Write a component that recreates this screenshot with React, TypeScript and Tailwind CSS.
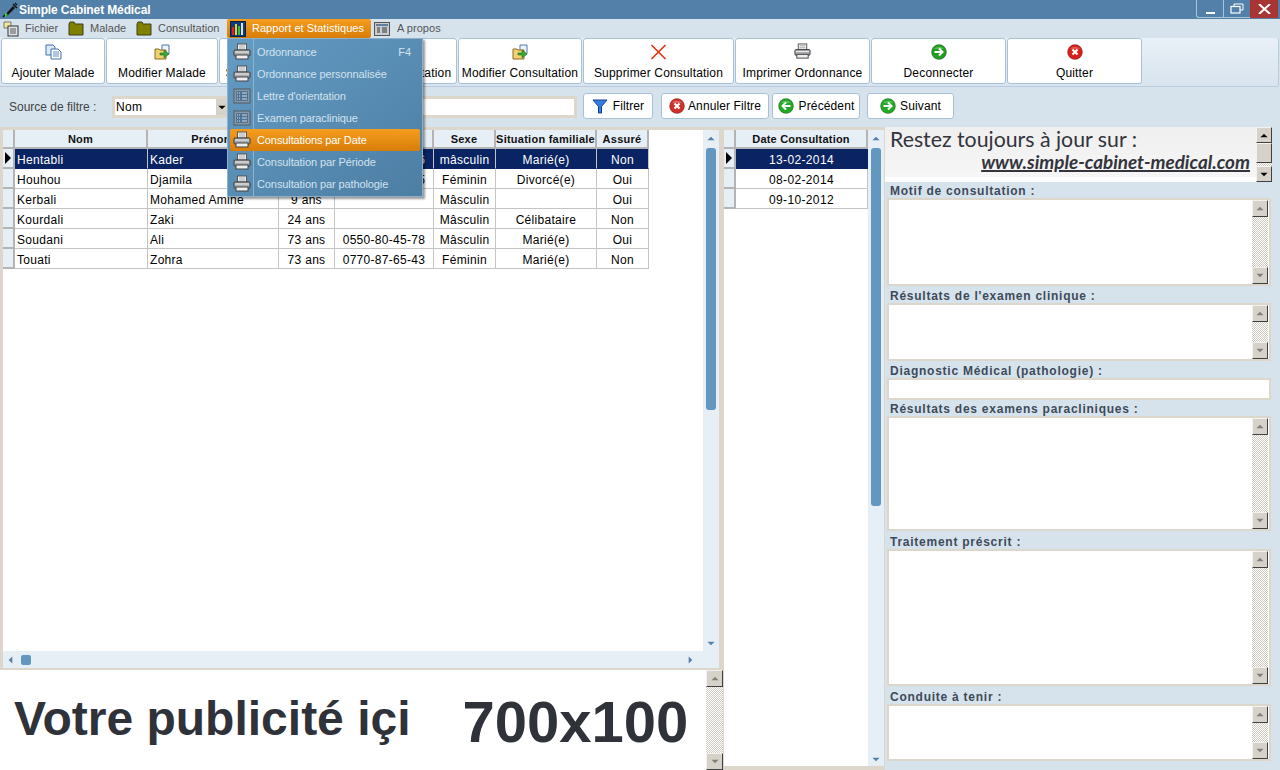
import React from "react";

const FONT = "font-['Liberation_Sans',Arial,sans-serif]";

function Printer({ s = 18 }: { s?: number }) {
  return (
    <svg width={s} height={s} viewBox="0 0 18 18">
      <rect x="4.5" y="1" width="9" height="6" fill="#f2f2f2" stroke="#555" />
      <path d="M6 3h6M6 5h6" stroke="#aaa" />
      <rect x="1" y="7" width="16" height="6" rx="1" fill="#a9acb0" stroke="#3a3a3a" />
      <rect x="3" y="12" width="12" height="4" fill="#eee" stroke="#444" />
      <path d="M2 9h14" stroke="#eee" />
    </svg>
  );
}
function Doc() {
  return (
    <svg width="18" height="16" viewBox="0 0 18 16">
      <rect x="1" y="1" width="16" height="14" fill="#8a98a5" stroke="#4d5a66" />
      <rect x="3" y="3" width="12" height="10" fill="#4f7394" />
      <path d="M4 5h1M6 5h1M4 8h1M6 8h1M4 11h1M6 11h1M9 5h5M9 8h5M9 11h5" stroke="#d4dde4" />
    </svg>
  );
}
function Folder() {
  return (
    <svg width="16" height="15" viewBox="0 0 16 15">
      <path d="M1 3l1-2h4l1 2h8v11H1z" fill="#7f7f00" stroke="#3f3f1a" />
    </svg>
  );
}
function Round({ bg, kind }: { bg: string; kind: "right" | "left" | "x" }) {
  return (
    <svg width="16" height="16" viewBox="0 0 16 16">
      <circle cx="8" cy="8" r="7.5" fill={bg} stroke="#00000040" />
      <path d="M3 5a6 5 0 0 1 10 0z" fill="#ffffff40" />
      {kind === "right" && <path d="M3.5 8h8M8 4.5L11.5 8 8 11.5" stroke="#fff" strokeWidth="2" fill="none" />}
      {kind === "left" && <path d="M12.5 8h-8M8 4.5L4.5 8 8 11.5" stroke="#fff" strokeWidth="2" fill="none" />}
      {kind === "x" && <path d="M5.5 5.5l5 5M10.5 5.5l-5 5" stroke="#fff" strokeWidth="2.2" />}
    </svg>
  );
}
function AddIcon() {
  return (
    <svg width="17" height="16" viewBox="0 0 17 16">
      <path d="M1 1h7l2 2v8H1z" fill="#dceaf8" stroke="#3f6fb0" />
      <path d="M6 5h7l3 3v7H6z" fill="#fff" stroke="#3f6fb0" />
      <path d="M8 8h6M8 10h6M8 12h6" stroke="#5e8fc8" />
    </svg>
  );
}
function EditIcon() {
  return (
    <svg width="17" height="16" viewBox="0 0 17 16">
      <path d="M8 1h7v9H8z" fill="#eef4fb" stroke="#4a76ad" />
      <path d="M1 5h4l1 1h6v9H1z" fill="#f0d070" stroke="#8c6a20" />
      <path d="M6 9h4V6l5 4-5 4v-3H6z" fill="#3aa838" stroke="#1f6d1e" strokeWidth=".6" />
    </svg>
  );
}
function XIcon() {
  return (
    <svg width="17" height="16" viewBox="0 0 17 16">
      <path d="M1.5 1l14 14M15.5 1l-14 14" stroke="#e8300c" strokeWidth="1.6" />
    </svg>
  );
}

const tools: { label: string; w: string; icon: React.ReactNode }[] = [
  { label: "Ajouter Malade", w: "w-[104px]", icon: <AddIcon /> },
  { label: "Modifier Malade", w: "w-[112px]", icon: <EditIcon /> },
  { label: "Supprimer Malade", w: "w-[114px]", icon: <XIcon /> },
  { label: "Ajouter Consultation", w: "w-[123px]", icon: <AddIcon /> },
  { label: "Modifier Consultation", w: "w-[124px]", icon: <EditIcon /> },
  { label: "Supprimer Consultation", w: "w-[151px]", icon: <XIcon /> },
  { label: "Imprimer Ordonnance", w: "w-[135px]", icon: <Printer s={17} /> },
  { label: "Deconnecter", w: "w-[135px]", icon: <Round bg="#1fa01f" kind="right" /> },
  { label: "Quitter", w: "w-[135px]", icon: <Round bg="#d8201a" kind="x" /> },
];

const menuItems: { label: string; doc?: boolean; sel?: boolean; key?: string }[] = [
  { label: "Ordonnance", key: "F4" },
  { label: "Ordonnance personnalisée" },
  { label: "Lettre d'orientation", doc: true },
  { label: "Examen paraclinique", doc: true },
  { label: "Consultations par Date", sel: true },
  { label: "Consultation par Période" },
  { label: "Consultation par pathologie" },
];

const cols = [
  { n: "Nom", c: "w-[133px] text-left pl-[2px]" },
  { n: "Prénom", c: "w-[131px] text-left pl-[2px]" },
  { n: "Age", c: "w-[56px] text-center" },
  { n: "Téléphone", c: "w-[99px] text-center" },
  { n: "Sexe", c: "w-[62px] text-center" },
  { n: "Situation familiale", c: "w-[101px] text-center" },
  { n: "Assuré", c: "w-[52px] text-center" },
];
const rows = [
  ["Hentabli", "Kader", "45 ans", "0555-12-34-56", "mâsculin", "Marié(e)", "Non"],
  ["Houhou", "Djamila", "38 ans", "0661-22-33-45", "Féminin", "Divorcé(e)", "Oui"],
  ["Kerbali", "Mohamed Amine", "9 ans", "", "Mâsculin", "", "Oui"],
  ["Kourdali", "Zaki", "24 ans", "", "Mâsculin", "Célibataire", "Non"],
  ["Soudani", "Ali", "73 ans", "0550-80-45-78", "Mâsculin", "Marié(e)", "Oui"],
  ["Touati", "Zohra", "73 ans", "0770-87-65-43", "Féminin", "Marié(e)", "Non"],
];

function Indicator({ sel }: { sel?: boolean }) {
  return (
    <div className="w-[12px] shrink-0 bg-[#e6eef6] border-r-2 border-b-2 border-[#b4b4b4] flex items-center justify-center">
      {sel && <div className="w-0 h-0 border-y-[6px] border-y-transparent border-l-[6px] border-l-black" />}
    </div>
  );
}

function Tri({ dir, c }: { dir: "up" | "down" | "left" | "right"; c: string }) {
  const p = { up: "M0 6h10L5 1z", down: "M0 1h10L5 6z", left: "M6 0v10L1 5z", right: "M1 0v10L6 5z" }[dir];
  const v = dir === "up" || dir === "down" ? "0 0 10 7" : "0 0 7 10";
  return (
    <svg width={dir === "up" || dir === "down" ? 8 : 5} height={dir === "up" || dir === "down" ? 5 : 8} viewBox={v}>
      <path d={p} fill={c} />
    </svg>
  );
}

function SBtn({ dir, dim, h = "h-[17px]" }: { dir: "up" | "down"; dim?: boolean; h?: string }) {
  return (
    <div className={`${h} w-full shrink-0 bg-[#d6d2ca] border border-t-[#f4f2ee] border-l-[#f4f2ee] border-r-[#404040] border-b-[#404040] flex items-center justify-center`}>
      <Tri dir={dir} c={dim ? "#808080" : "#000"} />
    </div>
  );
}

const checker = "bg-[repeating-conic-gradient(#cfcbc3_0_25%,#ffffff_0_50%)] bg-[length:2px_2px]";

function ClassicScroll({ w = "w-[16px]", dim = true }: { w?: string; dim?: boolean }) {
  return (
    <div className={`${w} shrink-0 flex flex-col ${checker}`}>
      <SBtn dir="up" dim={dim} />
      <div className="flex-1" />
      <SBtn dir="down" dim={dim} />
    </div>
  );
}

function Area({ h, scroll = true }: { h: string; scroll?: boolean }) {
  return (
    <div className={`${h} mx-[2px] shrink-0 w-[384px] bg-white border-2 border-[#dcd6cb] pr-[1px] flex justify-end`}>
      {scroll && <ClassicScroll />}
    </div>
  );
}

function Label({ children, mt }: { children: React.ReactNode; mt: string }) {
  return (
    <div className={`${mt} h-[16px] pl-[5px] text-[12px] leading-[18px] font-bold tracking-[0.75px] text-[#3e4a5a]`}>
      {children}
    </div>
  );
}

function FBtn({ w, icon, label, className = "", gap = "gap-[4px]" }: { w: string; icon: React.ReactNode; label: string; className?: string; gap?: string }) {
  return (
    <div className={`${w} ${className} ${gap} mt-[6px] h-[26px] shrink-0 bg-white border border-[#a9c1d6] rounded-[3px] flex items-center justify-center text-[12px] tracking-[0.12px] text-black`}>
      {icon}
      <span>{label}</span>
    </div>
  );
}

export default function App() {
  return (
    <div className={`${FONT} relative w-[1280px] h-[770px] overflow-hidden bg-[#d6e3ec] flex flex-col text-[12px]`}>
      {/* title bar */}
      <div className="h-[19px] shrink-0 bg-[#5380a8] flex items-center pl-[2px]">
        <svg width="16" height="16" viewBox="0 0 16 16">
          <path d="M3 13L11 4l2 2-8 8z" fill="#111" />
          <path d="M1 15l3-3M11 2l4 4M13 1l2 2" stroke="#111" strokeWidth="1.5" />
          <path d="M3 10l3 3-3 2z" fill="#3fd03f" />
        </svg>
        <span className="ml-[1px] text-white font-bold text-[12px] tracking-[-0.12px]">Simple Cabinet Médical</span>
        <div className="ml-auto mr-[2px] h-[18px] self-start flex">
          <div className="w-[27px] border-l border-b border-[#a9c4da] rounded-bl-[3px] flex items-end justify-center pb-[3px]">
            <div className="w-[9px] h-[2px] bg-white" />
          </div>
          <div className="w-[27px] border-l border-b border-[#a9c4da] flex items-center justify-center">
            <svg width="14" height="11" viewBox="0 0 14 11" fill="none" stroke="#fff">
              <path d="M4 3V1h9v6h-3" />
              <rect x="1" y="3.5" width="9" height="6.5" strokeWidth="1.2" />
            </svg>
          </div>
          <div className="w-[28px] bg-[#a83434] flex items-center justify-center">
            <svg width="13" height="10" viewBox="0 0 13 10">
              <path d="M1 0l11 10M12 0L1 10" stroke="#fff" strokeWidth="2" />
            </svg>
          </div>
        </div>
      </div>

      {/* menu bar */}
      <div className="h-[19px] shrink-0 flex items-center text-[11px] tracking-[0.03px] text-[#555]">
        <div className="w-[68px] flex items-center pl-[3px] gap-[6px]">
          <svg width="16" height="16" viewBox="0 0 16 16">
            <path d="M1 1h7v6H1z" fill="#f5e79a" stroke="#777" />
            <rect x="5" y="5" width="10" height="10" fill="#dfe3e6" stroke="#333" />
            <path d="M7 8h6M7 10h6M7 12h6" stroke="#555" />
          </svg>
          <span>Fichier</span>
        </div>
        <div className="w-[68px] flex items-center gap-[6px]"><Folder /><span>Malade</span></div>
        <div className="w-[91px] flex items-center gap-[6px]"><Folder /><span>Consultation</span></div>
        <div className="w-[144px] h-[19px] bg-gradient-to-b from-[#f59d1e] to-[#d77d08] rounded-[2px] text-white flex items-center pl-[3px] gap-[6px]">
          <svg width="16" height="16" viewBox="0 0 16 16">
            <rect x="0.5" y="0.5" width="15" height="15" fill="#123a78" stroke="#0a2040" />
            <path d="M3 14V6" stroke="#e02020" strokeWidth="2" />
            <path d="M6 14V3" stroke="#f0d020" strokeWidth="2" />
            <path d="M9 14V5" stroke="#30c030" strokeWidth="2" />
            <path d="M12 14V2" stroke="#e0e0e0" strokeWidth="2" />
          </svg>
          <span>Rapport et Statistiques</span>
        </div>
        <div className="ml-[3px] flex items-center gap-[7px]">
          <svg width="16" height="14" viewBox="0 0 16 14">
            <rect x="0.5" y="0.5" width="15" height="13" fill="#c8ccd0" stroke="#555" />
            <path d="M2 3h12" stroke="#5f7f9c" strokeWidth="2" />
            <path d="M3 6h3M3 8h3M3 10h3M8 6h5M8 8h5M8 10h5" stroke="#333" />
          </svg>
          <span>A propos</span>
        </div>
      </div>

      {/* toolbar */}
      <div className="h-[49px] shrink-0 flex gap-[1px] border-b border-[#b9cddd] bg-gradient-to-b from-[#e9f0f7] to-[#d8e4ee] border-r rounded-r-[3px] w-[1279px]">
        {tools.map((t, i) => (
          <div key={t.label} className={`${t.w} ${i === 0 ? "ml-[1px]" : ""} h-[46px] shrink-0 bg-white border border-[#a9c1d6] rounded-[3px] flex flex-col items-center text-[12px] tracking-[0.17px] text-black whitespace-nowrap`}>
            <div className="h-[17px] mt-[4px] flex items-center justify-center">{t.icon}</div>
            <div className="mt-[6px] leading-[15px]">{t.label}</div>
          </div>
        ))}
      </div>

      {/* filter row */}
      <div className="h-[40px] shrink-0 flex items-start">
        <span className="w-[112px] mt-[14px] shrink-0 pl-[9px] text-[#444] text-[12px] leading-none">Source de filtre :</span>
        <div className="w-[118px] mt-[9px] h-[22px] shrink-0 bg-white border-[3px] border-[#dcd6cb] flex items-center pl-[1px] text-[12px] tracking-[0.3px]">
          Nom
          <div className="ml-auto w-[11px] h-[16px] bg-[#d6d2ca] flex items-center justify-center"><Tri dir="down" c="#000" /></div>
        </div>
        <div className="ml-[3px] mt-[9px] w-[344px] h-[22px] shrink-0 bg-white border-[3px] border-[#dcd6cb]" />
        <FBtn
          w="w-[70px]"
          className="ml-[6px]"
          gap="gap-[5px]"
          label="Filtrer"
          icon={
            <svg width="16" height="15" viewBox="0 0 16 15">
              <path d="M1 1h14L9.5 7.5V14h-3V7.5z" fill="#2f7fe0" stroke="#123f90" />
            </svg>
          }
        />
        <FBtn w="w-[108px]" className="ml-[8px]" gap="gap-[3px]" label="Annuler Filtre" icon={<Round bg="#d03028" kind="x" />} />
        <FBtn w="w-[88px]" className="ml-[3px]" gap="gap-[5px]" label="Précédent" icon={<Round bg="#22a822" kind="left" />} />
        <FBtn w="w-[87px]" className="ml-[7px]" gap="gap-[4px]" label="Suivant" icon={<Round bg="#22a822" kind="right" />} />
      </div>

      {/* body */}
      <div className="flex-1 flex min-h-0">
        {/* left */}
        <div className="w-[723px] shrink-0 flex flex-col">
          <div className="h-[543px] shrink-0 bg-white border-[3px] border-r-[4px] border-[#dcd6cb] flex">
            <div className="flex-1 flex flex-col min-w-0">
              <div className="flex h-[19px] shrink-0 text-[11px] font-bold text-[#111] tracking-[0.25px]">
                <Indicator />
                {cols.map((c) => (
                  <div key={c.n} className={`${c.c.split(" ")[0]} shrink-0 bg-[#e6eef6] border-r-2 border-b-2 border-[#b4b4b4] text-center leading-[18px] whitespace-nowrap`}>
                    {c.n}
                  </div>
                ))}
              </div>
              {rows.map((r, i) => (
                <div key={i} className={`flex h-[20px] shrink-0 text-[12px] tracking-[0.3px] leading-[22px] ${i === 0 ? "text-white" : "text-black"}`}>
                  <Indicator sel={i === 0} />
                  {r.map((v, j) => (
                    <div
                      key={j}
                      className={`${cols[j].c} shrink-0 whitespace-nowrap overflow-hidden border-b border-r ${
                        i === 0 ? "bg-[#0a2463] border-[#0a2463] border-r-[#c4c4c4]" : "border-[#c4c4c4]"
                      }`}
                    >
                      {v}
                    </div>
                  ))}
                </div>
              ))}
            </div>
            <div className="w-[16px] shrink-0 bg-[#e6eef6] flex flex-col items-center pt-[6px]">
              <Tri dir="up" c="#5380a8" />
              <div className="mt-[7px] w-[10px] h-[262px] rounded-[3px] bg-[#6497c0]" />
              <div className="mt-auto mb-[21px]"><Tri dir="down" c="#5380a8" /></div>
            </div>
          </div>
          <div className="h-0 relative">
            <div className="absolute left-[3px] right-[4px] -top-[19px] h-[17px] bg-[#e6eef6] flex items-center px-[5px]">
              <Tri dir="left" c="#5380a8" />
              <div className="ml-[8px] w-[10px] h-[10px] rounded-[2px] bg-[#6497c0]" />
              <div className="ml-auto mr-[21px]"><Tri dir="right" c="#5380a8" /></div>
            </div>
          </div>
          <div className="flex-1 flex bg-white">
            <div className="flex-1 flex items-center text-[#30323a] font-bold whitespace-nowrap pl-[14px]">
              <span className="text-[48px] leading-none -mt-[2px]">Votre publicité içi</span>
              <span className="ml-[52px] mt-[3px] text-[58px] leading-none">700x100</span>
            </div>
            <ClassicScroll w="w-[17px]" />
          </div>
        </div>

        {/* middle */}
        <div className="w-[162px] shrink-0 h-[643px] bg-white border-x-[1px] border-b-[4px] border-t-[3px] border-[#dcd6cb] flex">
          <div className="flex-1 flex flex-col min-w-0">
            <div className="flex h-[19px] shrink-0 text-[11px] font-bold text-[#111] tracking-[0.2px]">
              <Indicator />
              <div className="flex-1 bg-[#e6eef6] border-r-2 border-b-2 border-[#b4b4b4] text-center leading-[18px]">Date Consultation</div>
            </div>
            {["13-02-2014", "08-02-2014", "09-10-2012"].map((d, i) => (
              <div key={d} className={`flex h-[20px] shrink-0 tracking-[0.35px] leading-[22px] ${i === 0 ? "text-white" : "text-black"}`}>
                <Indicator sel={i === 0} />
                <div className={`flex-1 text-center overflow-hidden border-b border-r ${i === 0 ? "bg-[#0a2463] border-[#0a2463]" : "border-[#c4c4c4]"}`}>{d}</div>
              </div>
            ))}
          </div>
          <div className="w-[16px] shrink-0 bg-[#e6eef6] flex flex-col items-center pt-[6px]">
            <Tri dir="up" c="#5380a8" />
            <div className="mt-[7px] w-[10px] h-[358px] rounded-[3px] bg-[#6497c0]" />
            <div className="mt-auto mb-[4px]"><Tri dir="down" c="#5380a8" /></div>
          </div>
        </div>

        {/* right */}
        <div className="flex-1 flex flex-col min-w-0">
          <div className="h-[55px] w-[387px] shrink-0 flex">
            <div className="w-[371px] shrink-0 bg-gradient-to-b from-[#efefef] to-[#f6f6f6] border-b-[5px] border-white pl-[5px] pr-[6px] font-['Lato',sans-serif] text-[#33343c]">
              <div className="text-[21.3px] leading-[25px]">Restez toujours à jour sur :</div>
              <div className="text-right text-[18.9px] leading-[19px] font-bold italic underline decoration-2">www.simple-cabinet-medical.com</div>
            </div>
            <div className={`w-[16px] shrink-0 flex flex-col ${checker}`}>
              <SBtn dir="up" h="h-[16px]" />
              <div className="h-[20px] shrink-0 bg-[#d6d2ca] border border-t-[#f4f2ee] border-l-[#f4f2ee] border-r-[#404040] border-b-[#404040]" />
              <div className="flex-1" />
              <SBtn dir="down" h="h-[16px]" />
            </div>
          </div>
          <Label mt="mt-0">Motif de consultation :</Label>
          <Area h="h-[88px]" />
          <Label mt="mt-[1px]">Résultats de l'examen clinique :</Label>
          <Area h="h-[58px]" />
          <Label mt="mt-[1px]">Diagnostic Médical (pathologie) :</Label>
          <Area h="h-[22px]" scroll={false} />
          <Label mt="mt-[0px]">Résultats des examens paracliniques :</Label>
          <Area h="h-[115px]" />
          <Label mt="mt-[2px]">Traitement préscrit :</Label>
          <Area h="h-[137px]" />
          <Label mt="mt-[2px]">Conduite à tenir :</Label>
          <Area h="h-[57px]" />
        </div>
      </div>

      {/* dropdown menu */}
      <div className="absolute left-[227px] top-[38px] w-[196px] h-[159px] bg-gradient-to-br from-[#649cc4] to-[#4d7ea4] border border-[#8fb0c8] shadow-[2px_2px_2px_rgba(0,0,0,0.4)] pt-[2px] text-[11px] tracking-[-0.1px] text-[#d3e2ed]">
        <div className="absolute left-[25px] top-0 bottom-0 w-px bg-[#8fb3cd]" />
        {menuItems.map((m) => (
          <div key={m.label} className={`relative h-[22px] flex items-center mx-[2px] rounded-[2px] ${m.sel ? "bg-gradient-to-b from-[#f59d1e] to-[#d77d08]" : ""}`}>
            <div className="w-[26px] flex justify-center -ml-[1px]">{m.doc ? <Doc /> : <Printer />}</div>
            <span className={`ml-[2px] ${m.sel ? "text-white" : ""}`}>{m.label}</span>
            {m.key && <span className="ml-auto mr-[9px]">{m.key}</span>}
          </div>
        ))}
      </div>
    </div>
  );
}
